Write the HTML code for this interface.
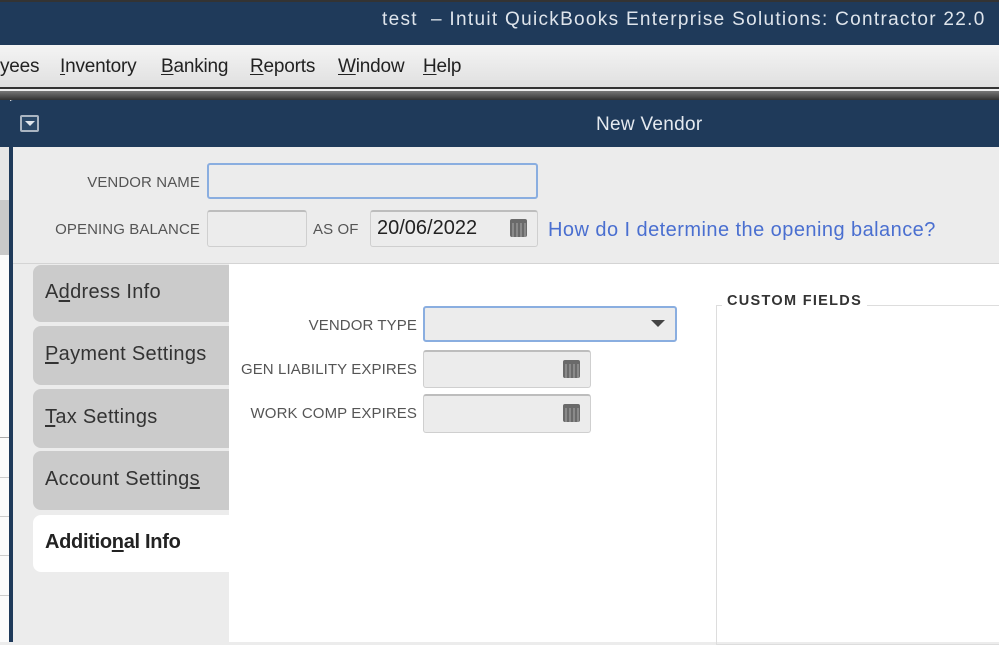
<!DOCTYPE html>
<html><head><style>
*{margin:0;padding:0;box-sizing:border-box}
body{width:999px;height:642px;overflow:hidden;position:relative;background:#ececec;font-family:"Liberation Sans",Arial,sans-serif}
.a{position:absolute}
.lbl{position:absolute;font-size:15px;color:#555;text-align:right;letter-spacing:0.1px;white-space:nowrap}
.inp{position:absolute;background:#ececec;border:1px solid #cfcfcf;border-top:2px solid #bdbdbd;border-radius:3px}
.cal{position:absolute;width:17px;height:18px;background:#6a6a6a;border-radius:2px;
background-image:linear-gradient(#6a6a6a 0 4px,transparent 4px),repeating-linear-gradient(90deg,#6a6a6a 0 2px,#8a8a8a 2px 4px);}
.tab{position:absolute;left:33px;width:196px;background:#cbcbcb;border-radius:8px 0 0 8px;font-size:20px;color:#333;padding-left:12px;letter-spacing:0.3px}
u{text-decoration:underline;text-underline-offset:2px}
</style></head><body>
<div class="a" style="left:0;top:0;width:999px;height:45px;background:#1f3a5a;border-top:2px solid #333"></div>
<div class="a" style="left:382px;top:9px;font-size:19px;color:#dfe5ec;white-space:nowrap;letter-spacing:1.3px">test &nbsp;– Intuit QuickBooks Enterprise Solutions: Contractor 22.0</div>
<div class="a" style="left:0;top:45px;width:999px;height:44px;background:linear-gradient(#f4f4f4,#e0e0e0);border-bottom:2px solid #333"></div>
<div class="a" style="left:0;top:56px;font-size:19px;color:#222;white-space:nowrap;letter-spacing:-0.2px">
<span>yees</span><span style="position:absolute;left:60px"><u>I</u>nventory</span><span style="position:absolute;left:161px"><u>B</u>anking</span><span style="position:absolute;left:250px"><u>R</u>eports</span><span style="position:absolute;left:338px"><u>W</u>indow</span><span style="position:absolute;left:423px"><u>H</u>elp</span></div>
<div class="a" style="left:0;top:91px;width:999px;height:9px;background:linear-gradient(#777,#555 50%,#333)"></div>
<div class="a" style="left:0;top:100px;width:10px;height:47px;background:#1f3a5a"></div>
<div class="a" style="left:0;top:147px;width:10px;height:53px;background:#e6e6e6"></div>
<div class="a" style="left:0;top:200px;width:10px;height:55px;background:#c9c9c9"></div>
<div class="a" style="left:0;top:255px;width:10px;height:387px;background:#fbfbfb"></div>
<div class="a" style="left:0;top:437px;width:10px;height:1px;background:#aaa"></div>
<div class="a" style="left:0;top:477px;width:10px;height:1px;background:#ccc"></div>
<div class="a" style="left:0;top:516px;width:10px;height:1px;background:#ccc"></div>
<div class="a" style="left:0;top:555px;width:10px;height:1px;background:#ccc"></div>
<div class="a" style="left:0;top:595px;width:10px;height:1px;background:#ccc"></div>
<div class="a" style="left:9px;top:100px;width:990px;height:542px;background:#1f3a5a;border-radius:4px 0 0 0"></div>
<div class="a" style="left:13px;top:147px;width:986px;height:495px;background:#ececec"></div>
<div class="a" style="left:20px;top:115px;width:19px;height:17px;border:2px solid #aab5c2;border-radius:2px;background:#2a4868"></div>
<div class="a" style="left:25px;top:121px;width:0;height:0;border-left:5px solid transparent;border-right:5px solid transparent;border-top:5px solid #dfe5ec"></div>
<div class="a" style="left:596px;top:114px;font-size:19px;color:#e4e9ef;letter-spacing:0.3px">New Vendor</div>
<div class="lbl" style="left:40px;width:160px;top:174px">VENDOR NAME</div>
<div class="a" style="left:207px;top:163px;width:331px;height:36px;border:2px solid #8aaee0;border-radius:3px;background:#ececec"></div>
<div class="lbl" style="left:40px;width:160px;top:221px">OPENING BALANCE</div>
<div class="inp" style="left:207px;top:210px;width:100px;height:37px"></div>
<div class="lbl" style="left:313px;top:221px">AS OF</div>
<div class="inp" style="left:370px;top:210px;width:168px;height:37px"></div>
<div class="a" style="left:377px;top:217px;font-size:20px;color:#222">20/06/2022</div>
<div class="cal" style="left:510px;top:219px"></div>
<div class="a" style="left:548px;top:219px;font-size:20px;color:#4a6fd0;letter-spacing:0.45px;white-space:nowrap">How do I determine the opening balance?</div>
<div class="a" style="left:13px;top:263px;width:986px;height:1px;background:#d4d4d4"></div>
<div class="a" style="left:229px;top:264px;width:770px;height:378px;background:#fff"></div>
<div class="tab" style="top:265px;height:57px;line-height:55px">A<u>d</u>dress Info</div>
<div class="tab" style="top:326px;height:59px;line-height:57px"><u>P</u>ayment Settings</div>
<div class="tab" style="top:389px;height:59px;line-height:57px"><u>T</u>ax Settings</div>
<div class="tab" style="top:451px;height:59px;line-height:57px">Account Setting<u>s</u></div>
<div class="tab" style="top:515px;height:57px;line-height:55px;background:#fff;font-weight:bold;color:#222;letter-spacing:-0.3px">Additio<u>n</u>al Info</div>
<div class="lbl" style="left:220px;width:197px;top:317px">VENDOR TYPE</div>
<div class="a" style="left:423px;top:306px;width:254px;height:36px;border:2px solid #8aaee0;border-radius:3px;background:#ececec"></div>
<div class="a" style="left:651px;top:320px;border-left:7px solid transparent;border-right:7px solid transparent;border-top:7px solid #444"></div>
<div class="lbl" style="left:220px;width:197px;top:361px">GEN LIABILITY EXPIRES</div>
<div class="inp" style="left:423px;top:350px;width:168px;height:38px"></div>
<div class="cal" style="left:563px;top:360px"></div>
<div class="lbl" style="left:220px;width:197px;top:405px">WORK COMP EXPIRES</div>
<div class="inp" style="left:423px;top:394px;width:168px;height:39px"></div>
<div class="cal" style="left:563px;top:404px"></div>
<div class="a" style="left:716px;top:305px;width:290px;height:340px;border:1px solid #ddd"></div>
<div class="a" style="left:722px;top:293px;padding:0 5px;background:#fff;font-size:14.5px;font-weight:bold;color:#333;letter-spacing:1.3px;white-space:nowrap">CUSTOM FIELDS</div>
</body></html>
